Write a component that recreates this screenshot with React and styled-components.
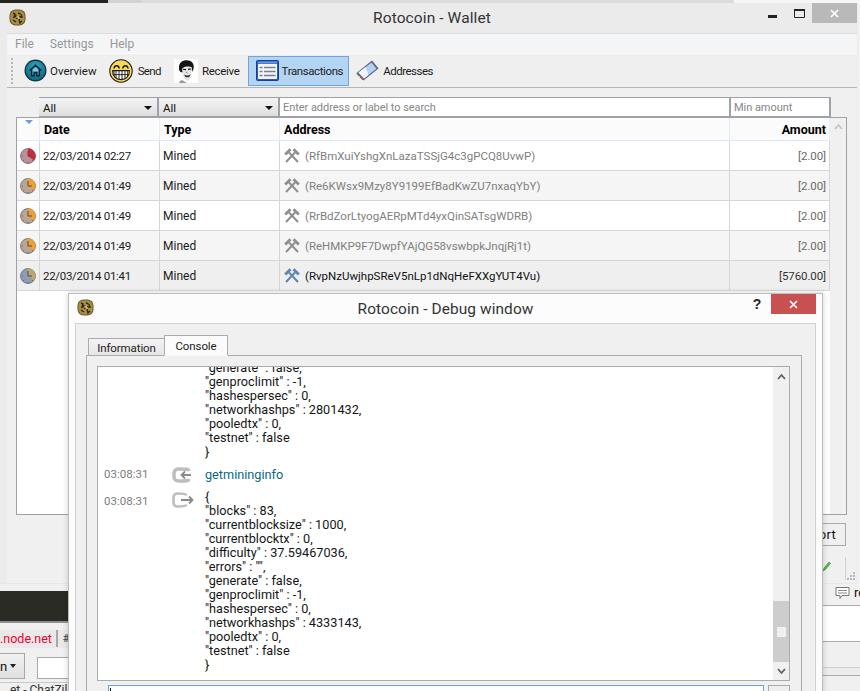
import React from "react";
import styled, { createGlobalStyle } from "styled-components";

const Global = createGlobalStyle`
  html, body { margin: 0; padding: 0; background: #f0f0f0; }
  #root { width: 860px; height: 691px; }
  * { box-sizing: border-box; }
`;
const FONT = `Roboto, "Liberation Sans", sans-serif`;

const Desktop = styled.div`
  position: relative; width: 860px; height: 691px; overflow: hidden; background: #f2f2f2;
  font-family: ${FONT}; font-size: 12px; color: #111;
`;
const TopStrip = styled.div`
  position: absolute; left: 0; top: 0; right: 0; height: 3px; display: flex;
`;
const StripPart = styled.div`
  width: ${p => p.$w}px; flex-grow: ${p => p.$grow || 0}; background: ${p => p.$c};
`;

/* back window */
const BackWindow = styled.div`
  position: absolute; left: 0; right: 0; top: 584px; bottom: 0; display: flex; justify-content: space-between;
  background: #f0f0f0;
`;
const BackLeft = styled.div`
  width: 70px; display: flex; flex-direction: column; padding-top: 7px; overflow: hidden;
`;
const DarkBar = styled.div`
  height: 32px; background: #2a2b25; border-bottom: 2px solid #8f8f8f; flex-shrink: 0;
`;
const ChatTabs = styled.div`
  margin-top: 7px; height: 18px; display: flex; flex-shrink: 0; background: #e9e9e9; border-bottom: 1px solid #e9e9e9;
`;
const ChatTab = styled.div`
  width: 58px; border-right: 2px solid #a8a8a8; color: #f0002a; font-size: 12.5px; line-height: 17px; text-align: right; padding-right: 5px; white-space: nowrap; flex-shrink: 0;
`;
const ChatTabNext = styled.div`
  padding-left: 5px; font-size: 11px; line-height: 17px; color: #555; font-weight: 700;
`;
const BackControls = styled.div`
  margin-top: 5px; display: flex; gap: 12px; align-items: flex-end; height: 26px; flex-shrink: 0;
`;
const MenuBtn = styled.div`
  width: 27px; height: 26px; border: 1px solid #a8a8a8; border-left: 0; background: linear-gradient(#f2f2f2, #dfdfdf);
  display: flex; align-items: center; justify-content: flex-end; padding-right: 8px; gap: 3px; font-size: 13px;
`;
const Caret = styled.span`
  width: 0; height: 0; border-left: 3px solid transparent; border-right: 3px solid transparent; border-top: 4px solid #222;
`;
const BackInput = styled.div`
  width: 40px; height: 22px; background: #fff; border: 1px solid #a8a8a8;
`;
const BackFooter = styled.div`
  margin-top: 3px; padding-left: 10px; border-top: 1px solid #c8c8c8; font-size: 12px; line-height: 14px; white-space: nowrap; color: #333;
`;
const BackRight = styled.div`
  width: 38px; display: flex; flex-direction: column;
`;
const ChatName = styled.div`
  height: 22px; display: flex; align-items: center; gap: 4px; padding: 0 0 4px 13px; font-size: 13px; border-bottom: 1px solid #ababab; overflow: hidden;
`;
const BackWhite = styled.div`
  height: 36px; background: #fff; border-bottom: 1px solid #ababab;
`;
const BackBand = styled.div`
  height: ${p => p.$h}px; background: ${p => p.$c}; border-bottom: 1px solid ${p => p.$b};
`;

/* wallet */
const Wallet = styled.div`
  position: absolute; left: 0; top: 3px; width: 858px; height: 581px; background: #ebebeb;
  display: flex; flex-direction: column; padding: 0 1px 0 7px; border-bottom: 1px solid #e8e8e8;
`;
const TitleBar = styled.div`
  position: relative; height: 30px; flex-shrink: 0; display: flex; align-items: center; justify-content: center;
`;
const TitleText = styled.div`
  font-size: ${p => p.$size || 15.5}px; color: #333; letter-spacing: .1px;
`;
const TitleIcon = styled.div`
  position: absolute; left: ${p => p.$x}px; top: ${p => p.$y}px; display: flex;
`;
const WinControls = styled.div`
  position: absolute; right: 0; top: 0; display: flex; align-items: flex-start;
`;
const WinBtn = styled.div`
  width: ${p => p.$w}px; height: 20px; display: flex; align-items: center; justify-content: center;
  padding-top: ${p => p.$pt || 0}px;
  background: ${p => p.$bg || "transparent"};
`;
const MenuBar = styled.div`
  height: 21px; flex-shrink: 0; display: flex; align-items: center; gap: 16px; padding-left: 8px;
  background: #f4f5f7; border-top: 1px solid #dcdcdc; border-bottom: 1px solid #fbfbfb; color: #979797; font-size: 12px;
`;
const Toolbar = styled.div`
  height: 34px; flex-shrink: 0; display: flex; align-items: center; padding-left: 4px;
  background: #efefef; border-bottom: 1px solid #b6b6b6;
`;
const Grip = styled.div`
  width: 2px; height: 26px; margin-right: 11px;
  background: repeating-linear-gradient(#b5b5b5 0 2px, transparent 2px 4px);
`;
const ToolBtn = styled.div`
  height: 30px; display: flex; align-items: center; gap: ${p => p.$gap || 3}px; flex-shrink: 0;
  margin-left: ${p => p.$ml || 0}px; padding: 0 ${p => p.$active ? 5 : 0}px 0 ${p => p.$active ? 7 : 0}px;
  background: ${p => p.$active ? "#b3d4f2" : "transparent"}; border: 1px solid ${p => p.$active ? "#6da6dd" : "transparent"};
  white-space: nowrap; color: #1c1c1c; font-size: 11.5px; letter-spacing: ${p => p.$ls || 0}px;
`;
const Content = styled.div`
  flex: 1; display: flex; flex-direction: column; background: #f0f0f0; padding: 9px 0 0 9px; min-height: 0; position: relative;
`;
const Filters = styled.div`
  display: flex; padding-left: 23px; height: 20px; flex-shrink: 0;
`;
const Combo = styled.div`
  width: ${p => p.$w}px; height: 20px; background: linear-gradient(#f4f4f4, #dedede); border: 1px solid #a0a0a8; border-right-width: 2px; border-left: 0;
  display: flex; align-items: center; justify-content: space-between; padding: 1px 5px 0 4px; color: #111; font-size: 11.5px;
`;
const ComboCaret = styled.span`
  width: 0; height: 0; border-left: 4px solid transparent; border-right: 4px solid transparent; border-top: 4px solid #111;
`;
const SearchBox = styled.div`
  width: ${p => p.$w}px; height: 20px; background: #fff; border: 1px solid #a0a0a8; border-left: 0; border-right-width: 2px; padding-left: 3px;
  color: #868686; line-height: 20px; font-size: 11px; letter-spacing: -.05px; white-space: nowrap;
`;
const TableFrame = styled.div`
  width: 831px; height: 398px; flex-shrink: 0; border: 1px solid #a0a0a8; background: #fff; display: flex; overflow: hidden;
`;
const TableMain = styled.div`
  width: 813px; display: flex; flex-direction: column; position: relative;
`;
const SortMark = styled.span`
  position: absolute; left: 8px; top: 2px; width: 0; height: 0; border-left: 4px solid transparent; border-right: 4px solid transparent; border-top: 4px solid #6d9fd6;
`;
const Columns = `display: grid; grid-template-columns: 23px 120px 120px 450px 100px;`;
const HeadRow = styled.div`
  ${Columns} height: 23px; background: #fbfbfb; border-bottom: 1px solid #deeafa; font-weight: 700; flex-shrink: 0;
`;
const HeadCell = styled.div`
  border-right: 1px solid #e6edf6; line-height: 24px; padding: 0 ${p => p.$right ? 3 : 4}px; text-align: ${p => p.$right ? "right" : "left"}; font-size: 12.5px; color: #000;
`;
const Row = styled.div`
  ${Columns} height: 30px; flex-shrink: 0; background: ${p => p.$bg}; border-bottom: 1px solid #d6d6d6;
`;
const Cell = styled.div`
  border-right: 1px solid #d6d6d6; display: flex; align-items: center; white-space: nowrap; gap: 5px;
  justify-content: ${p => p.$right ? "flex-end" : "flex-start"}; padding: 0 3px 0 ${p => p.$pad ?? 3}px;
  color: ${p => p.$c || "#1a1a1a"}; font-size: ${p => p.$size || 12}px; letter-spacing: ${p => p.$ls || 0}px;
`;
const TableScroll = styled.div`
  width: 16px; background: #f0f0f0; display: flex; justify-content: center; padding-top: 5px;
`;
const StatusRow = styled.div`
  flex: 1; display: flex; justify-content: flex-end; align-items: flex-start; padding-top: 8px; position: relative;
`;
const ExportBtn = styled.div`
  width: 56px; height: 23px; border: 1px solid #ababab; background: #efefef; display: flex; align-items: center; justify-content: flex-end; padding-right: 9px; margin-right: 11px; font-size: 13px; letter-spacing: .3px;
`;
const PencilSlot = styled.div`
  position: absolute; right: 26px; top: 46px; display: flex;
`;
const StatusSep = styled.div`
  position: absolute; right: 11px; top: 42px; height: 23px; width: 1px; background: #d2d2d2;
`;
const ResizeGrip = styled.div`
  position: absolute; right: 1px; bottom: 2px; display: flex;
`;

/* debug */
const Debug = styled.div`
  position: absolute; left: 68px; top: 293px; width: 755px; height: 420px; background: #fcfcfc;
  border: 1px solid #bdbdbd; box-shadow: 0 0 6px rgba(0,0,0,.18); display: flex; flex-direction: column; padding: 0 6px;
`;
const DebugTitle = styled.div`
  height: 29px; flex-shrink: 0; position: relative; display: flex; align-items: center; justify-content: center;
`;
const HelpMark = styled.div`
  width: 14px; height: 20px; font: 700 14px "Liberation Sans", sans-serif; color: #222; text-align: center; line-height: 20px;
`;
const DebugPanel = styled.div`
  flex: 1; background: #f0f0f0; border: 1px solid #d0d0d0; padding: 11px 13px 0 10px; display: flex; flex-direction: column; min-height: 0;
`;
const Tabs = styled.div`
  height: 21px; display: flex; align-items: flex-end; padding-left: 2px; flex-shrink: 0; position: relative; z-index: 1; margin-bottom: -1px;
`;
const Tab = styled.div`
  width: ${p => p.$w}px; height: ${p => p.$active ? 21 : 18}px; border: 1px solid #ababab;
  border-bottom: ${p => p.$active ? "1px solid #f8f8f8" : "1px solid #ababab"}; border-right-width: ${p => p.$active ? 1 : 0}px;
  background: ${p => p.$active ? "#fbfbfb" : "linear-gradient(#f3f3f3,#e6e6e6)"};
  text-align: center; font-size: 11.5px; line-height: ${p => p.$active ? 21 : 18}px; color: #1c1c1c; letter-spacing: -.1px;
`;
const TabPane = styled.div`
  flex: 1; border: 1px solid #ababab; background: #f0f0f0; padding: 10px 11px 0 10px; display: flex; flex-direction: column; min-height: 0;
`;
const ConsoleBox = styled.div`
  height: 315px; flex-shrink: 0; border: 1px solid #ababab; background: #fff; display: flex; overflow: hidden;
`;
const ConsoleLog = styled.div`
  flex: 1; min-width: 0; display: flex; flex-direction: column; justify-content: flex-end; padding: 0 0 8px 6px; overflow: hidden;
`;
const Entry = styled.div`
  display: grid; grid-template-columns: 68px 33px 1fr; flex-shrink: 0; margin-top: ${p => p.$mt || 0}px;
`;
const Time = styled.div`
  color: #7d7d7d; font-size: 11.5px; line-height: 14px; padding-top: ${p => p.$pt || 0}px;
`;
const EntryIcon = styled.div`
  display: flex; align-items: flex-start; padding-top: ${p => p.$pt || 0}px;
`;
const Lines = styled.div`
  font-size: 12.7px; line-height: 14px; color: ${p => p.$c || "#151515"}; white-space: pre; padding-top: ${p => p.$pt || 0}px;
`;
const VScroll = styled.div`
  width: 16px; background: #f0f0f0; display: flex; flex-direction: column; align-items: center; flex-shrink: 0;
`;
const ScrollArrow = styled.div`
  height: ${p => p.$h}px; display: flex; align-items: center; justify-content: center; flex-shrink: 0;
`;
const ScrollTrack = styled.div`
  flex: 1; width: 100%; display: flex; flex-direction: column; justify-content: flex-end;
`;
const ScrollThumb = styled.div`
  height: 61px; background: #cdcdcd; display: flex; align-items: center; justify-content: center;
`;
const ThumbGrip = styled.div`
  width: 9px; height: 10px; background: #f0f0f0;
`;
const InputRow = styled.div`
  display: flex; gap: 4px; margin-top: 4px; padding-left: 11px; flex-shrink: 0;
`;
const ConsoleInput = styled.div`
  width: 656px; height: 22px; background: #fff; border: 1px solid #6aa3dc; padding: 2px 0 0 1px; display: flex;
`;
const TextCaret = styled.div`
  width: 1px; height: 13px; background: #111;
`;
const ClearBtn = styled.div`
  width: 22px; height: 22px; border: 1px solid #ababab; background: #eee;
`;
const BubbleSvg = styled.svg`
  flex-shrink: 0;
`;

/* icons */
const Coin = ({ s = 17 }) => (
  <svg width={s} height={s} viewBox="0 0 17 17">
    <rect x=".5" y=".5" width="16" height="16" rx="6" fill="#6a5724" />
    <rect x="1.500" y="1.500" width="14" height="14" rx="5" fill="#a98f45" />
    <path d="M4 4l2 1-1 3 2-1 1 3M9 4l3 1 1 3-3 0M4 11l3 2M10 10l1 4 2-2" stroke="#2e2610" strokeWidth="1.400" fill="none" />
    <path d="M11 3l2 2" stroke="#7fa044" strokeWidth="1.300" />
    <path d="M7 8l3 0 0 2" stroke="#e7d58c" strokeWidth="1" fill="none" />
  </svg>
);
const HomeIcon = () => (
  <svg width="23" height="23" viewBox="0 0 23 23">
    <defs><radialGradient id="hg" cx=".5" cy=".35" r=".7"><stop offset="0" stopColor="#2fb0c8" /><stop offset="1" stopColor="#0b5f7c" /></radialGradient></defs>
    <circle cx="11.500" cy="11.500" r="11" fill="#16313d" />
    <circle cx="11.500" cy="11.500" r="9.800" fill="url(#hg)" />
    <path d="M8.400 11v5.200h1.200v-3.400h3.800v3.400h1.200V11l-2.900-2.600z" fill="#bfe9ef" opacity=".55" />
    <path d="M5.600 11.600l5.900-5.400 5.900 5.400M7.600 10.800v6h2.600v-3.400h2.600v3.400h2.600v-6" fill="none" stroke="#0a2530" strokeWidth="1.500" />
  </svg>
);
const LaughIcon = () => (
  <svg width="24" height="24" viewBox="0 0 24 24">
    <circle cx="12" cy="12" r="11.200" fill="#f8da5a" stroke="#1a1a1a" strokeWidth="1.100" />
    <path d="M5 9.500c.6-3.600 4.600-3.600 5.200 0M13.800 9.500c.6-3.600 4.600-3.600 5.200 0" fill="none" stroke="#1a1a1a" strokeWidth="1.500" />
    <path d="M3.600 11.600h16.800c.3 5.600-3.400 9-8.400 9s-8.700-3.400-8.400-9z" fill="#fff" stroke="#1a1a1a" strokeWidth="1.100" />
    <path d="M3.800 15.600h16.400M7 12v7.400M10 12v8.400M13 12v8.400M16 12v8M18.700 12v5.600M5 12v5" stroke="#1a1a1a" strokeWidth=".9" fill="none" />
  </svg>
);
const FaceIcon = () => (
  <svg width="24" height="24" viewBox="0 0 24 24">
    <rect width="24" height="24" fill="#fff" />
    <path d="M5 10C4.500 3 9 1 14 1.400c4.500.4 6.500 4 5.500 8.600l-1.500 3-.6-5c-2-1-6-.6-8 .4l-.9 5.100C7 13.500 5.200 12.500 5 10z" fill="#151515" />
    <path d="M8 9.500l1 7c1 4 3.500 5.500 5.500 5 2-.6 3-4 3-6.500l.2-6.500c-3-1-7-.6-9.700 1z" fill="#e4e4e4" />
    <path d="M9 10.200l3 .4M14 10.400l3-.4" stroke="#111" strokeWidth="1.100" />
    <path d="M10 15.400c2 1.400 4.500 1.400 6.500 0l-1 2.400c-1.500.7-3 .7-4.300 0z" fill="#333" />
    <path d="M8 21c-1.500.5-2.500 1-3 3h8z" fill="#999" />
    <path d="M12 13l1.500 1" stroke="#666" strokeWidth=".8" />
  </svg>
);
const ListIcon = () => (
  <svg width="23" height="21" viewBox="0 0 23 21">
    <rect x=".5" y=".5" width="22" height="20" rx="1" fill="#2a5cbe" stroke="#1d3f8c" />
    <rect x="2" y="4" width="19" height="15" fill="#f3f5fa" />
    <rect x="2" y="1.500" width="19" height="2" fill="#6a97e2" />
    <path d="M3.500 7.500h3M8 7.500h11.500M3.500 11.500h3M8 11.500h11.500M3.500 15.500h3M8 15.500h11.500" stroke="#7b7f8a" strokeWidth="1.300" />
  </svg>
);
const BookIcon = () => (
  <svg width="23" height="21" viewBox="0 0 23 21">
    <path d="M.5 13L16 .5l6.500 8L7.500 20.500z" fill="#59627e" />
    <path d="M2.500 12.500L15.500 2.500l5 6.200L8 18.500z" fill="#b4d0f2" />
    <path d="M2.500 12.500l7-5.400 3 7.800L8 18.500z" fill="#f0f5fc" />
    <path d="M1 13.500l2.500 2.500" stroke="#3e9c52" strokeWidth="1.500" />
    <path d="M4 16.500l3 3" stroke="#c94b4b" strokeWidth="1.500" />
  </svg>
);
const Clock = ({ a, b }) => (
  <svg width="16" height="16" viewBox="0 0 16 16">
    <circle cx="8" cy="8" r="7.500" fill={b} stroke="#6f6a66" strokeWidth=".8" />
    <path d="M8 8V.5A7.500 7.500 0 0 1 14 12.500z" fill={a} />
    <path d="M8 3v5h4" fill="none" stroke="#5b4a3e" strokeWidth="1" />
    <path d="M8 14v1M2 8h1M3.500 12.500l.7-.7M12 12l.7.7" stroke="#555" strokeWidth=".8" />
  </svg>
);
const Hammers = ({ c }) => (
  <svg width="16" height="15" viewBox="0 0 16 15">
    <path d="M5 4.500L14 14M11 4.500L2 14" stroke={c} strokeWidth="2" fill="none" />
    <path d="M1.200 6.500L6.500 1.200M14.800 6.500L9.500 1.200" stroke={c} strokeWidth="2.800" fill="none" />
  </svg>
);
const Chevron = ({ up, c = "#606060" }) => (
  <svg width="9" height="7" viewBox="0 0 9 7">
    <path d={up ? "M1 6l3.500-4 3.500 4" : "M1 1l3.500 4 3.500-4"} fill="none" stroke={c} strokeWidth="1.800" />
  </svg>
);
const ConsoleArrow = ({ out }) => (
  <svg width="23" height="16" viewBox="0 0 23 16">
    {out ? (
      <>
        <path d="M14.500 3.400C14 2 12.500 1.500 6 1.500 3 1.500 1.500 3 1.500 5.500v5C1.500 13 3 14.500 6 14.500c6.500 0 8-.5 8.500-1.900" fill="none" stroke="#bdbdbd" strokeWidth="2.600" />
        <path d="M9 8h11.500M17 4.500L20.500 8 17 11.500" fill="none" stroke="#8a8a8a" strokeWidth="1.800" />
      </>
    ) : (
      <>
        <path d="M17 4C16.500 2.200 15 2 7 2 4 2 2 3.500 2 6v4c0 2.500 2 4 5 4 8 0 9.500-.2 10-2" fill="none" stroke="#bdbdbd" strokeWidth="3.600" />
        <path d="M19 8H9.500M13 4.500L9.500 8l3.500 3.500" fill="none" stroke="#8a8a8a" strokeWidth="1.800" />
      </>
    )}
  </svg>
);
const X = ({ s = 9 }) => (
  <svg width={s} height={s} viewBox="0 0 9 9"><path d="M1 1l7 7M8 1L1 8" stroke="#fff" strokeWidth="1.700" /></svg>
);
const Minimize = () => <svg width="9" height="3" viewBox="0 0 9 3"><rect width="9" height="3" fill="#222" /></svg>;
const Maximize = () => <svg width="11" height="9" viewBox="0 0 11 9"><path d="M.5 1h10v7.500H.5z" fill="none" stroke="#222" /><rect width="11" height="2" fill="#222" /></svg>;
const Pencil = () => (
  <svg width="9" height="11" viewBox="0 0 9 11"><path d="M1 10l1-3 5-6 1.500 1.500-5 6z" fill="#4cc23c" stroke="#2a7f2a" strokeWidth=".5" /></svg>
);
const GripDots = () => (
  <svg width="9" height="9" viewBox="0 0 9 9" fill="#b8b8b8"><rect x="6" y="0" width="2" height="2" /><rect x="3" y="3" width="2" height="2" /><rect x="6" y="3" width="2" height="2" /><rect x="0" y="6" width="2" height="2" /><rect x="3" y="6" width="2" height="2" /><rect x="6" y="6" width="2" height="2" /></svg>
);
const Bubble = () => (
  <BubbleSvg width="15" height="12" viewBox="0 0 15 12"><path d="M1 .5h13v8H7l-2 3v-3H1z" fill="#fff" stroke="#777" /><path d="M3 3.500h9M3 6h9" stroke="#888" /></BubbleSvg>
);

const rows = [
  { date: "22/03/2014 02:27", addr: "(RfBmXuiYshgXnLazaTSSjG4c3gPCQ8UvwP)", amt: "[2.00]", a: "#c9283e", b: "#bd8f98", bg: "#fff" },
  { date: "22/03/2014 01:49", addr: "(Re6KWsx9Mzy8Y9199EfBadKwZU7nxaqYbY)", amt: "[2.00]", a: "#f0a030", b: "#b8a594", bg: "#f5f5f5" },
  { date: "22/03/2014 01:49", addr: "(RrBdZorLtyogAERpMTd4yxQinSATsgWDRB)", amt: "[2.00]", a: "#f0a030", b: "#b8a594", bg: "#fff" },
  { date: "22/03/2014 01:49", addr: "(ReHMKP9F7DwpfYAjQG58vswbpkJnqjRj1t)", amt: "[2.00]", a: "#f0a030", b: "#b8a594", bg: "#f5f5f5" },
  { date: "22/03/2014 01:41", addr: "(RvpNzUwjhpSReV5nLp1dNqHeFXXgYUT4Vu)", amt: "[5760.00]", a: "#b8a86c", b: "#8c9db8", bg: "#efefef", strong: true },
];

const olderReply = `"generate" : false,
"genproclimit" : -1,
"hashespersec" : 0,
"networkhashps" : 2801432,
"pooledtx" : 0,
"testnet" : false
}`;
const reply = `{
"blocks" : 83,
"currentblocksize" : 1000,
"currentblocktx" : 0,
"difficulty" : 37.59467036,
"errors" : "",
"generate" : false,
"genproclimit" : -1,
"hashespersec" : 0,
"networkhashps" : 4333143,
"pooledtx" : 0,
"testnet" : false
}`;

export default function App() {
  return (
    <Desktop>
      <Global />
      <TopStrip>
        <StripPart $w={108} $c="#24231f" />
        <StripPart $w={34} $c="#d2d2d2" />
        <StripPart $w={592} $c="#dcdcdc" />
        <StripPart $grow={1} $c="#f6f6f6" />
      </TopStrip>

      <BackWindow>
        <BackLeft>
          <DarkBar />
          <ChatTabs>
            <ChatTab>.node.net</ChatTab>
            <ChatTabNext>#</ChatTabNext>
          </ChatTabs>
          <BackControls>
            <MenuBtn>n <Caret /></MenuBtn>
            <BackInput />
          </BackControls>
          <BackFooter>et - ChatZilla</BackFooter>
        </BackLeft>
        <BackRight>
          <ChatName><Bubble /> ro</ChatName>
          <BackWhite />
          <BackBand $h={26} $c="#f0f0f0" $b="#d0d0d0" />
          <BackBand $h={8} $c="#ececec" $b="#ababab" />
          <BackBand $h={15} $c="#f0f0f0" $b="#f0f0f0" />
        </BackRight>
      </BackWindow>

      <Wallet>
        <TitleBar>
          <TitleIcon $x={2} $y={6}><Coin /></TitleIcon>
          <TitleText>Rotocoin - Wallet</TitleText>
          <WinControls>
            <WinBtn $w={28} $pt={6}><Minimize /></WinBtn>
            <WinBtn $w={26}><Maximize /></WinBtn>
            <WinBtn $w={45} $bg="#b9b9b9"><X /></WinBtn>
          </WinControls>
        </TitleBar>
        <MenuBar>
          <span>File</span><span>Settings</span><span>Help</span>
        </MenuBar>
        <Toolbar>
          <Grip />
          <ToolBtn $ml={-1}><HomeIcon />Overview</ToolBtn>
          <ToolBtn $ml={10} $gap={5} $ls={-.6}><LaughIcon />Send</ToolBtn>
          <ToolBtn $ml={11} $gap={4} $ls={-.3}><FaceIcon />Receive</ToolBtn>
          <ToolBtn $ml={7} $active $ls={-.4}><ListIcon />Transactions</ToolBtn>
          <ToolBtn $ml={6} $gap={4} $ls={-.5}><BookIcon />Addresses</ToolBtn>
        </Toolbar>
        <Content>
          <Filters>
            <Combo $w={120}>All<ComboCaret /></Combo>
            <Combo $w={121}>All<ComboCaret /></Combo>
            <SearchBox $w={451}>Enter address or label to search</SearchBox>
            <SearchBox $w={100}>Min amount</SearchBox>
          </Filters>
          <TableFrame>
            <TableMain>
              <SortMark />
              <HeadRow>
                <HeadCell />
                <HeadCell>Date</HeadCell>
                <HeadCell>Type</HeadCell>
                <HeadCell>Address</HeadCell>
                <HeadCell $right>Amount</HeadCell>
              </HeadRow>
              {rows.map((r, i) => (
                <Row key={i} $bg={r.bg}>
                  <Cell $pad={3}><Clock a={r.a} b={r.b} /></Cell>
                  <Cell $size={11.5} $ls={-.3}>{r.date}</Cell>
                  <Cell>Mined</Cell>
                  <Cell $c={r.strong ? "#111" : "#808080"} $pad={4} $size={11.5}>
                    <Hammers c={r.strong ? "#5f86b0" : "#8f8f8f"} />{r.addr}
                  </Cell>
                  <Cell $right $c={r.strong ? "#333" : "#6b6b6b"} $size={11.5} $ls={-.1}>{r.amt}</Cell>
                </Row>
              ))}
            </TableMain>
            <TableScroll><Chevron up c="#c4c4c4" /></TableScroll>
          </TableFrame>
          <StatusRow>
            <ExportBtn>ort</ExportBtn>
            <PencilSlot><Pencil /></PencilSlot>
            <StatusSep />
            <ResizeGrip><GripDots /></ResizeGrip>
          </StatusRow>
        </Content>
      </Wallet>

      <Debug>
        <DebugTitle>
          <TitleIcon $x={2} $y={5}><Coin /></TitleIcon>
          <TitleText $size={15.4}>Rotocoin - Debug window</TitleText>
          <WinControls>
            <HelpMark>?</HelpMark>
            <WinBtn $w={7} />
            <WinBtn $w={45} $bg="#c75050"><X /></WinBtn>
          </WinControls>
        </DebugTitle>
        <DebugPanel>
          <Tabs>
            <Tab $w={76}>Information</Tab>
            <Tab $w={64} $active>Console</Tab>
          </Tabs>
          <TabPane>
            <ConsoleBox>
              <ConsoleLog>
                <Entry>
                  <span />
                  <span />
                  <Lines>{olderReply}</Lines>
                </Entry>
                <Entry $mt={7}>
                  <Time $pt={1}>03:08:31</Time>
                  <EntryIcon $pt={1}><ConsoleArrow /></EntryIcon>
                  <Lines $c="#0a6a80" $pt={2}>getmininginfo</Lines>
                </Entry>
                <Entry $mt={7}>
                  <Time $pt={4}>03:08:31</Time>
                  <EntryIcon $pt={2}><ConsoleArrow out /></EntryIcon>
                  <Lines>{reply}</Lines>
                </Entry>
              </ConsoleLog>
              <VScroll>
                <ScrollArrow $h={18}><Chevron up /></ScrollArrow>
                <ScrollTrack>
                  <ScrollThumb><ThumbGrip /></ScrollThumb>
                </ScrollTrack>
                <ScrollArrow $h={18}><Chevron /></ScrollArrow>
              </VScroll>
            </ConsoleBox>
            <InputRow>
              <ConsoleInput><TextCaret /></ConsoleInput>
              <ClearBtn />
            </InputRow>
          </TabPane>
        </DebugPanel>
      </Debug>
    </Desktop>
  );
}
